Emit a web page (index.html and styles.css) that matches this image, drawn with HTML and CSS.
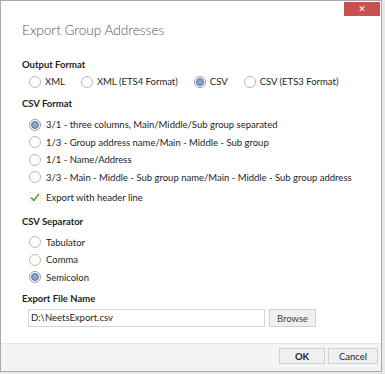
FILE: index.html
```html
<!DOCTYPE html>
<html lang="en">
<head>
    <meta charset="UTF-8">
    <title>Export Group Addresses</title>
    <link rel="stylesheet" href="styles.css">
</head>
<body>

    <!-- Dialog window -->
    <div class="dialog">
        <div class="titlebar">
            <button class="close-btn">&#x2715;</button>
        </div>

        <div class="content">
            <h1 class="title">Export Group Addresses</h1>

            <div class="section-label first">Output Format</div>
            <div class="radio-row">
                <label class="option"><span class="radio"></span>XML</label>
                <label class="option"><span class="radio"></span>XML (ETS4 Format)</label>
                <label class="option"><span class="radio checked"></span>CSV</label>
                <label class="option"><span class="radio"></span>CSV (ETS3 Format)</label>
            </div>

            <div class="section-label">CSV Format</div>
            <div class="option-list">
                <label class="option"><span class="radio checked"></span>3/1 - three columns, Main/Middle/Sub group separated</label>
                <label class="option"><span class="radio"></span>1/3 - Group address name/Main - Middle - Sub group</label>
                <label class="option"><span class="radio"></span>1/1 - Name/Address</label>
                <label class="option"><span class="radio"></span>3/3 - Main - Middle - Sub group name/Main - Middle - Sub group address</label>
                <label class="option check-row"><span class="checkbox">
                    <svg width="10" height="9" viewBox="0 0 10 9"><path d="M1 4.5 L3.8 7.5 L9 1" fill="none" stroke="#5aa83c" stroke-width="1.6"/></svg>
                </span>Export with header line</label>
            </div>

            <div class="section-label">CSV Separator</div>
            <div class="option-list">
                <label class="option"><span class="radio"></span>Tabulator</label>
                <label class="option"><span class="radio"></span>Comma</label>
                <label class="option"><span class="radio checked"></span>Semicolon</label>
            </div>

            <div class="section-label">Export File Name</div>
            <div class="file-row">
                <div class="text-input">D:\NeetsExport.csv</div>
                <button class="btn browse">Browse</button>
            </div>
        </div>

        <div class="footer">
            <button class="btn ok">OK</button>
            <button class="btn">Cancel</button>
        </div>
    </div>

</body>
</html>
```

FILE: styles.css
```css
/* Reset */
* {
    margin: 0;
    padding: 0;
    box-sizing: border-box;
}

body {
    width: 385px;
    height: 374px;
    background: #e9e9e9;
    font-family: 'Lato', 'Liberation Sans', sans-serif;
    font-size: 9.5px;
    color: #1e1e1e;
    overflow: hidden;
}

/* Dialog frame */
.dialog {
    width: 382px;
    height: 372px;
    background: #fff;
    border: 1px solid #a9a9a9;
    display: flex;
    flex-direction: column;
}

.titlebar {
    height: 18px;
    padding: 1px 1px 0 0;
    display: flex;
    justify-content: flex-end;
}

.close-btn {
    width: 36px;
    height: 14px;
    border: none;
    background: #c75050;
    color: #fff;
    font-size: 9px;
    font-weight: bold;
    line-height: 14px;
    font-family: 'DejaVu Sans', sans-serif;
}

.content {
    flex: 1;
    padding: 0 21px;
}

.title {
    margin-top: 1px;
    font-size: 13.6px;
    font-weight: 300;
    line-height: 20px;
    color: #555;
}

/* Group labels */
.section-label {
    font-weight: bold;
    line-height: 16px;
    margin-top: 5px;
    margin-bottom: 4px;
}

.section-label.first {
    margin-top: 17px;
    margin-bottom: 0;
}

.radio-row {
    display: flex;
    gap: 16px;
    height: 18px;
    padding-left: 7px;
}

.radio-row .option {
    gap: 4px;
}

.option-list {
    padding-left: 7px;
}

.option {
    display: flex;
    align-items: center;
    height: 17.5px;
    gap: 5px;
    white-space: nowrap;
}

.check-row {
    margin-top: 3px;
    margin-bottom: 7px;
}

/* Radio buttons */
.radio {
    flex: none;
    width: 12px;
    height: 12px;
    border-radius: 50%;
    border: 1px solid #b8b8b8;
    background: #fff;
    display: flex;
    align-items: center;
    justify-content: center;
}

.radio.checked {
    border-color: #8b9bb3;
}

.radio.checked::after {
    content: "";
    width: 6px;
    height: 6px;
    border-radius: 50%;
    background: #8ea3c3;
    border: 1px solid #54709a;
}

.checkbox {
    flex: none;
    width: 12px;
    height: 12px;
    border: 1px solid #f0f0f0;
    display: flex;
    align-items: center;
    justify-content: center;
}

/* File name row */
.file-row {
    display: flex;
    gap: 4px;
    margin-top: -2px;
    padding-left: 6px;
}

.text-input {
    width: 237px;
    height: 18px;
    border: 1px solid #d4d4d4;
    padding-left: 2px;
    line-height: 16px;
}

.btn {
    font-family: 'Lato', 'Liberation Sans', sans-serif;
    font-size: 9.5px;
    color: #1e1e1e;
    background: #f0f0f0;
    border: 1px solid #d0d0d0;
    height: 17px;
    line-height: 15px;
}

.browse {
    width: 47px;
    height: 18px;
    color: #444;
}

/* Footer buttons */
.footer {
    height: 28px;
    background: #f3f4f6;
    border-top: 1px solid #e8e8e8;
    display: flex;
    justify-content: flex-end;
    gap: 3px;
    padding: 4px 3px 0 0;
}

.footer .btn {
    width: 50px;
    height: 16px;
}

.footer .ok {
    width: 46px;
    font-weight: bold;
}
```
